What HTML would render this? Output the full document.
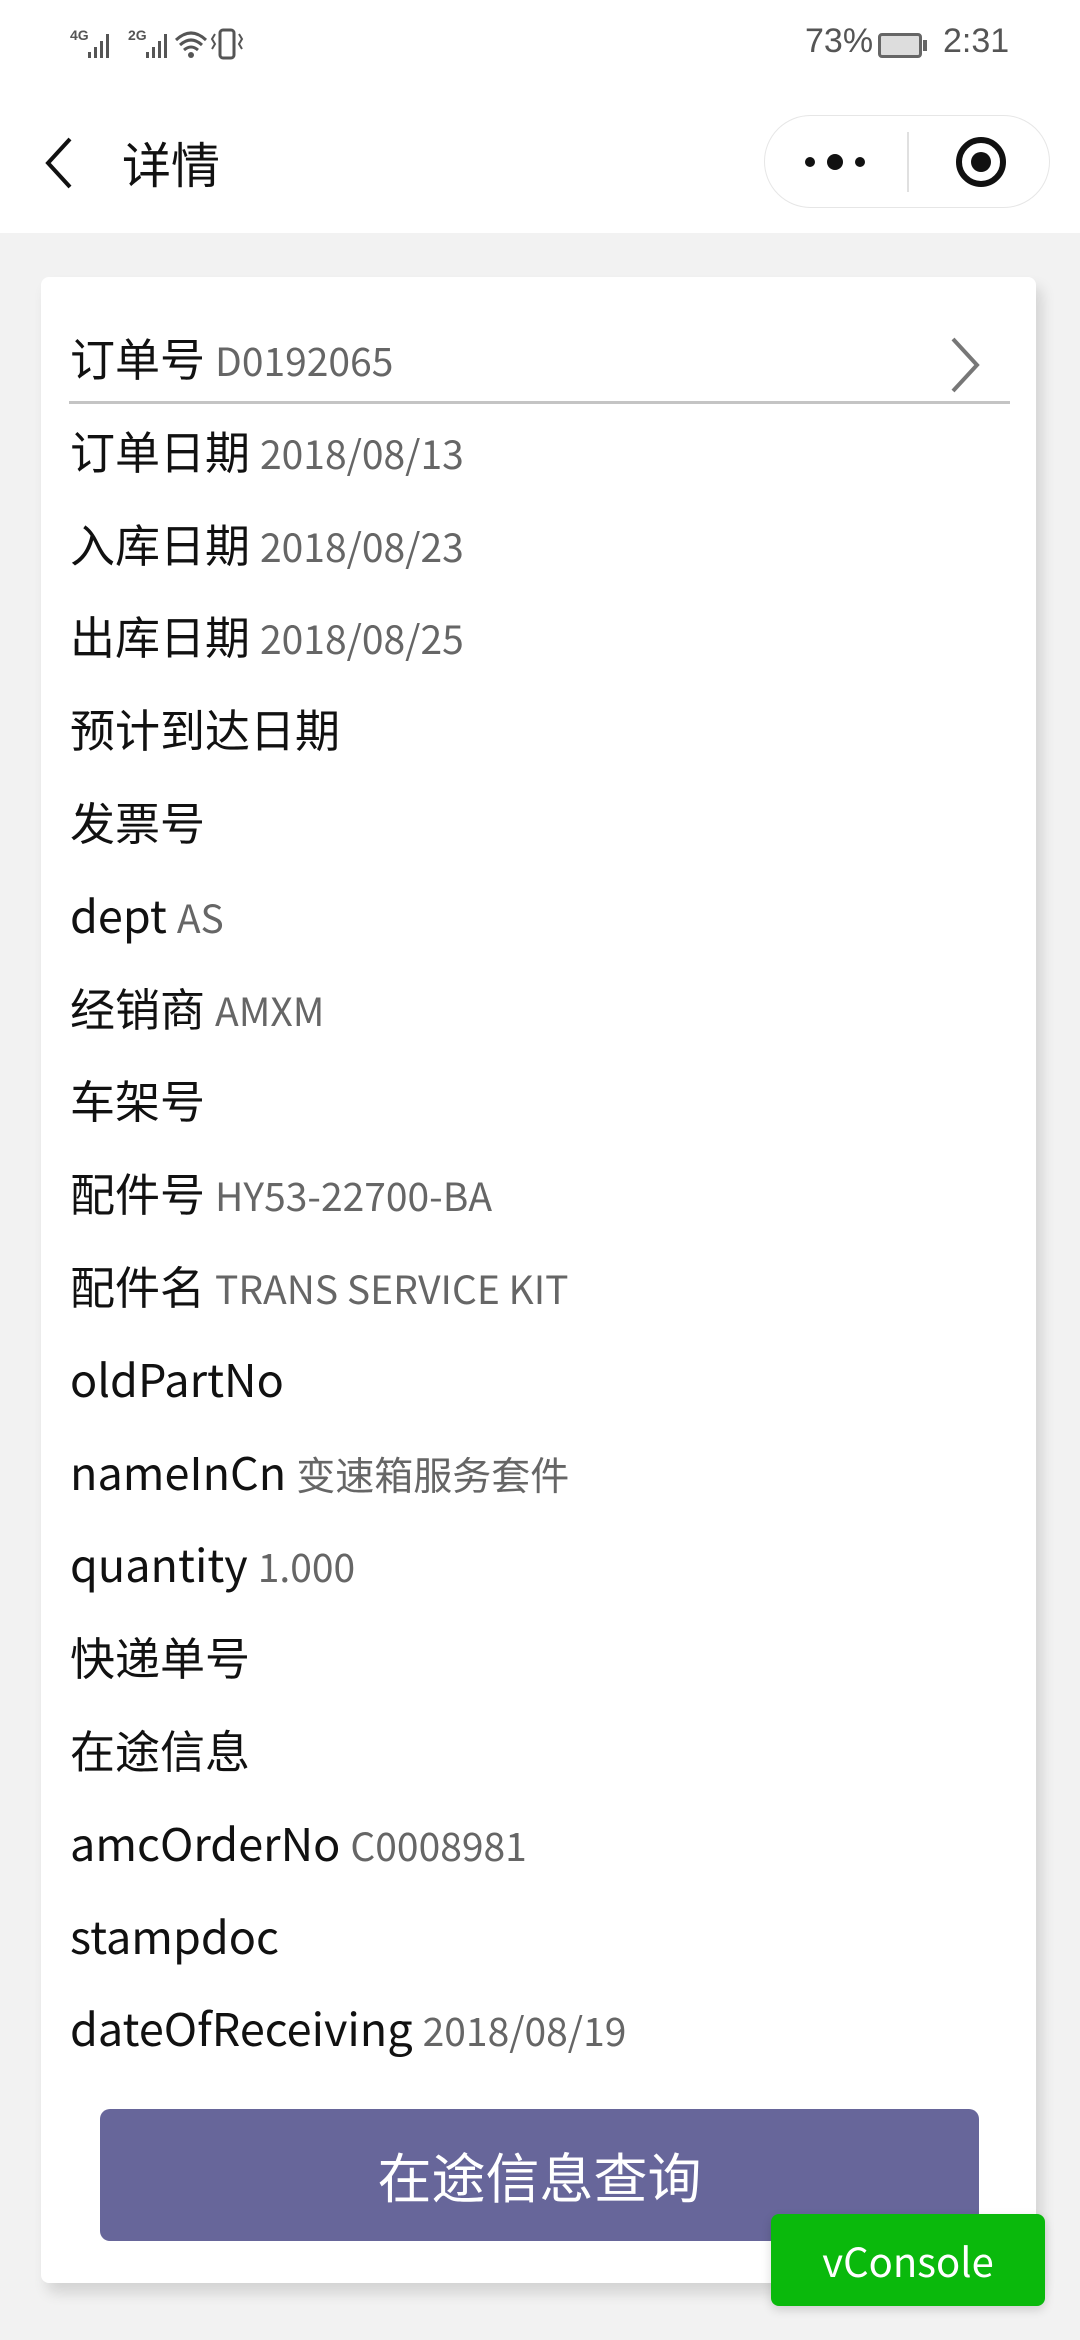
<!DOCTYPE html>
<html><head><meta charset="utf-8"><style>
*{margin:0;padding:0;box-sizing:border-box}
body{width:1080px;height:2340px;background:#f2f2f2;font-family:"Noto Sans CJK SC","Liberation Sans",sans-serif;position:relative;overflow:hidden}
.top{position:absolute;left:0;top:0;width:1080px;height:233px;background:#fff}
.st{position:absolute;top:22px;font-size:34px;color:#555;font-family:"Liberation Sans",sans-serif}
.card{position:absolute;left:41px;top:277px;width:995px;height:2006px;background:#fff;border-radius:8px;box-shadow:6px 10px 14px rgba(0,0,0,.13)}
.row{position:absolute;left:70px;height:64px;line-height:64px;font-size:45px;color:#111;white-space:nowrap}
.row span{font-size:39px;color:#666;margin-left:10px}
.btn{position:absolute;left:100px;top:2109px;width:879px;height:132px;background:#67669a;border-radius:10px;color:#fff;font-size:54px;text-align:center;line-height:132px}
.vc{position:absolute;left:771px;top:2214px;width:274px;height:92px;background:#0ab90c;border-radius:8px;color:#fff;font-size:40px;text-align:center;line-height:92px;box-shadow:0 4px 10px rgba(0,0,0,.15)}
</style></head><body>
<div class="top"></div>
<svg style="position:absolute;left:70px;top:24px" width="210" height="40">
<text x="0" y="16" font-size="14" font-weight="bold" fill="#555" font-family="Liberation Sans">4G</text>
<rect x="18" y="28" width="3" height="6" fill="#555"/><rect x="24" y="23" width="3" height="11" fill="#555"/><rect x="30" y="17" width="3" height="17" fill="#555"/><rect x="36" y="10" width="3" height="24" fill="#555"/>
<text x="58" y="16" font-size="14" font-weight="bold" fill="#555" font-family="Liberation Sans">2G</text>
<rect x="76" y="28" width="3" height="6" fill="#555"/><rect x="82" y="23" width="3" height="11" fill="#555"/><rect x="88" y="17" width="3" height="17" fill="#555"/><rect x="94" y="10" width="3" height="24" fill="#555"/>
<path d="M106 16 Q121 2 136 16 M110 21 Q121 11 132 21 M114 26 Q121 20 128 26" fill="none" stroke="#555" stroke-width="3"/><circle cx="121" cy="31" r="3" fill="#555"/>
<rect x="150" y="6" width="14" height="28" rx="3" fill="none" stroke="#555" stroke-width="3"/>
<path d="M145 10 l-3 5 3 5 -3 5 M169 10 l3 5 -3 5 3 5" fill="none" stroke="#555" stroke-width="2"/>
</svg>
<div class="st" style="left:805px">73%</div>
<div style="position:absolute;left:878px;top:33px;width:44px;height:25px;border:3px solid #666;border-radius:4px;background:#ddd"></div>
<div style="position:absolute;left:923px;top:40px;width:4px;height:11px;background:#666"></div>
<div class="st" style="left:943px">2:31</div>
<svg style="position:absolute;left:40px;top:135px" width="40" height="56"><polyline points="30,4 8,28 30,52" fill="none" stroke="#111" stroke-width="4"/></svg>
<div style="position:absolute;left:122px;top:130px;font-size:49px;line-height:66px;color:#111">详情</div>
<div style="position:absolute;left:764px;top:115px;width:286px;height:93px;border:1px solid #e6e6e6;border-radius:47px;background:#fff"></div>
<div style="position:absolute;left:907px;top:132px;width:2px;height:60px;background:#e0e0e0"></div>
<svg style="position:absolute;left:800px;top:145px" width="70" height="34"><circle cx="10" cy="17" r="5" fill="#111"/><circle cx="35" cy="17" r="8" fill="#111"/><circle cx="60" cy="17" r="5" fill="#111"/></svg>
<svg style="position:absolute;left:953px;top:134px" width="56" height="56"><circle cx="28" cy="28" r="22" fill="none" stroke="#111" stroke-width="6"/><circle cx="28" cy="28" r="10" fill="#111"/></svg>
<div class="card"></div>
<div style="position:absolute;left:69px;top:401px;width:941px;height:3px;background:#c4c4c4"></div>
<svg style="position:absolute;left:945px;top:336px" width="40" height="58"><polyline points="8,3 32,29 8,55" fill="none" stroke="#777" stroke-width="4"/></svg>
<div class="row" style="top:325px">订单号<span>D0192065</span></div>
<div class="row" style="top:418px">订单日期<span>2018/08/13</span></div>
<div class="row" style="top:511px">入库日期<span>2018/08/23</span></div>
<div class="row" style="top:603px">出库日期<span>2018/08/25</span></div>
<div class="row" style="top:696px">预计到达日期</div>
<div class="row" style="top:789px">发票号</div>
<div class="row" style="top:882px">dept<span>AS</span></div>
<div class="row" style="top:975px">经销商<span>AMXM</span></div>
<div class="row" style="top:1067px">车架号</div>
<div class="row" style="top:1160px">配件号<span>HY53-22700-BA</span></div>
<div class="row" style="top:1253px">配件名<span>TRANS SERVICE KIT</span></div>
<div class="row" style="top:1346px">oldPartNo</div>
<div class="row" style="top:1439px">nameInCn<span>变速箱服务套件</span></div>
<div class="row" style="top:1531px">quantity<span>1.000</span></div>
<div class="row" style="top:1624px">快递单号</div>
<div class="row" style="top:1717px">在途信息</div>
<div class="row" style="top:1810px">amcOrderNo<span>C0008981</span></div>
<div class="row" style="top:1903px">stampdoc</div>
<div class="row" style="top:1995px">dateOfReceiving<span>2018/08/19</span></div>
<div class="btn">在途信息查询</div>
<div class="vc">vConsole</div>
</body></html>
